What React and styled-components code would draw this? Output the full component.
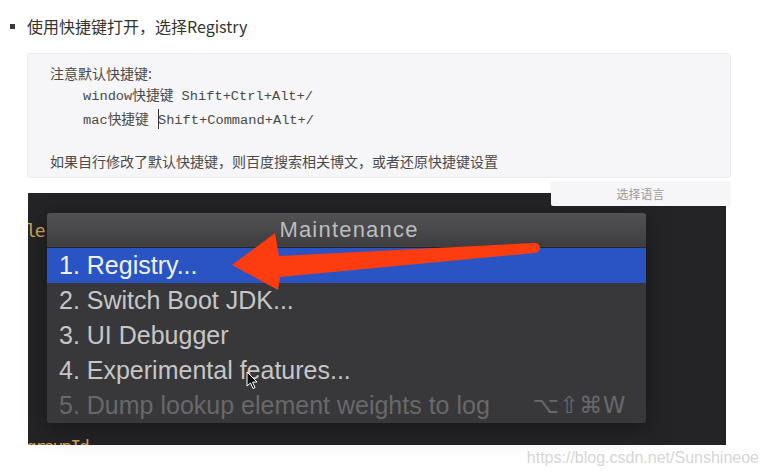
import React from "react";
import styled, { createGlobalStyle } from "styled-components";

const GlobalStyle = createGlobalStyle`
  html, body { margin: 0; padding: 0; background: #ffffff; }
  body { font-family: "Noto Sans", "Noto Sans CJK SC", sans-serif; }
`;

const Page = styled.div`
  width: 768px;
  height: 473px;
  overflow: hidden;
  padding-top: 14px;
  box-sizing: border-box;
  background: #ffffff;
`;

const TitleRow = styled.div`
  display: flex;
  align-items: center;
  gap: 12px;
  padding-left: 10px;
  height: 24px;
  font-family: "Noto Sans CJK SC", "Noto Sans", sans-serif;
  font-size: 16px;
  line-height: 24px;
  color: #333333;
`;

const Bullet = styled.span`
  width: 5px;
  height: 5px;
  background: #3a3a3a;
  flex: none;
`;

const CodeBox = styled.div`
  margin: 15px 0 0 27px;
  width: 704px;
  box-sizing: border-box;
  padding: 8px 22px 5px;
  background: #f6f6f8;
  border: 1px solid #ececee;
  border-radius: 3px;
  color: #4a4a4a;
`;

const NoteLine = styled.div`
  height: 22px;
  line-height: 22px;
  font-family: "Noto Sans CJK SC", "Noto Sans", sans-serif;
  font-size: 14px;
  white-space: nowrap;
`;

const KeyLine = styled.div`
  height: 19px;
  padding-top: 3px;
  line-height: 19px;
  padding-left: 33px;
  font-family: "Liberation Mono", "Noto Sans CJK SC", monospace;
  font-size: 13.7px;
  white-space: nowrap;
`;

const Caret = styled.span`
  display: inline-block;
  width: 0;
  height: 20px;
  margin-left: 1px;
  margin-right: -1px;
  vertical-align: -5px;
  border-left: 1.5px solid #333;
`;

const Figure = styled.div`
  position: relative;
  margin: 15px 0 0 28px;
  width: 698px;
  height: 252px;
`;

const Shot = styled.div`
  width: 100%;
  height: 100%;
  overflow: hidden;
  background: #242426;
  display: flex;
  flex-direction: column;
  padding-top: 29px;
  box-sizing: border-box;
`;

const EditorLine = styled.div`
  margin-top: ${(p) => p.$gap || 0}px;
  margin-left: -2px;
  height: 18px;
  line-height: 18px;
  font-family: "DejaVu Sans Mono", monospace;
  font-size: 18px;
  letter-spacing: -2px;
  color: #d8a657;
  white-space: nowrap;
`;

const Popup = styled.div`
  position: absolute;
  left: 19px;
  top: 20px;
  width: 599px;
  height: 210px;
  background: #38383a;
  border-radius: 3px;
  overflow: hidden;
  box-shadow: 0 6px 26px rgba(0, 0, 0, 0.35);
  font-family: "Liberation Sans", Arial, sans-serif;
`;

const PopupHeader = styled.div`
  height: 34px;
  line-height: 34px;
  text-align: center;
  background: linear-gradient(#525254, #3e3e40);
  border-bottom: 1px solid #262628;
  font-size: 22px;
  letter-spacing: 1.2px;
  padding-left: 5px;
  color: #bdbdbf;
`;

const Item = styled.div`
  display: flex;
  justify-content: space-between;
  height: 35px;
  line-height: 35px;
  padding: 0 20px 0 12px;
  font-size: 25px;
  white-space: nowrap;
  background: ${(p) => (p.$selected ? "#2a54c4" : "transparent")};
  color: ${(p) =>
    p.$selected ? "#eef2fb" : p.$disabled ? "#68686b" : "#c6c6c8"};
`;

const Shortcut = styled.span`
  font-family: "DejaVu Sans", sans-serif;
  font-size: 23px;
  letter-spacing: 0.5px;
  color: #68686b;
`;

const Overlay = styled.svg`
  position: absolute;
  left: 0;
  top: 0;
  pointer-events: none;
`;

const LangButton = styled.div`
  position: absolute;
  top: -12px;
  right: -4px;
  width: 179px;
  height: 25px;
  line-height: 25px;
  text-align: center;
  background: #f6f6f8;
  border-radius: 2px;
  box-shadow: 0 1px 2px rgba(0, 0, 0, 0.08);
  font-family: "Noto Sans CJK SC", sans-serif;
  font-size: 12px;
  color: #9a9a9a;
`;

const Watermark = styled.div`
  margin-top: 4px;
  padding-right: 9px;
  text-align: right;
  height: 18px;
  line-height: 18px;
  font-family: "Liberation Sans", Arial, sans-serif;
  font-size: 16px;
  color: #d6d6d6;
`;

const items = [
  { label: "1. Registry...", selected: true },
  { label: "2. Switch Boot JDK..." },
  { label: "3. UI Debugger" },
  { label: "4. Experimental features..." },
  { label: "5. Dump lookup element weights to log", disabled: true, shortcut: "⌥⇧⌘W" },
];

export default function App() {
  return (
    <Page>
      <GlobalStyle />
      <TitleRow>
        <Bullet />
        <span>使用快捷键打开，选择Registry</span>
      </TitleRow>
      <CodeBox>
        <NoteLine>注意默认快捷键:</NoteLine>
        <KeyLine>window快捷键 Shift+Ctrl+Alt+/</KeyLine>
        <KeyLine>
          mac快捷键 <Caret />Shift+Command+Alt+/
        </KeyLine>
        <NoteLine />
        <NoteLine>如果自行修改了默认快捷键，则百度搜索相关博文，或者还原快捷键设置</NoteLine>
      </CodeBox>
      <Figure>
        <Shot>
          <EditorLine>le:</EditorLine>
          <EditorLine $gap={198}>groupId</EditorLine>
        </Shot>
        <Popup>
          <PopupHeader>Maintenance</PopupHeader>
          {items.map((it) => (
            <Item key={it.label} $selected={it.selected} $disabled={it.disabled}>
              <span>{it.label}</span>
              {it.shortcut && <Shortcut>{it.shortcut}</Shortcut>}
            </Item>
          ))}
        </Popup>
        <Overlay width="698" height="252" viewBox="0 0 698 252">
          <path
            d="M204 72 L247 40 L251 63 L507 50 A5 5 0 0 1 507 60 L252 84 L250 97 Z"
            fill="#fd3c10"
          />
          <path
            d="M219 179 L219 193 L222.5 190 L225 195.5 L227 194.6 L224.6 189.2 L229 189 Z"
            fill="#111"
            stroke="#fff"
            strokeWidth="1"
            strokeLinejoin="round"
          />
        </Overlay>
        <LangButton>选择语言</LangButton>
      </Figure>
      <Watermark>https://blog.csdn.net/Sunshineoe</Watermark>
    </Page>
  );
}
